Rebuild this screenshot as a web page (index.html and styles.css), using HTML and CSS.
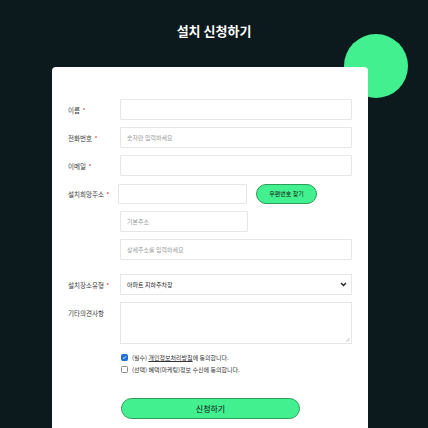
FILE: index.html
```html
<html>
<head>
    <meta charset="utf-8">
    <link rel="stylesheet" href="styles.css">
</head>
<body>
    <div class="page">
        <h1 class="title">설치 신청하기</h1>
        <div class="blob"></div>
        <form class="card">
            <div class="row">
                <label class="lbl">이름 <em>*</em></label>
                <input type="text" class="field">
            </div>
            <div class="row">
                <label class="lbl">전화번호 <em>*</em></label>
                <input type="text" class="field" placeholder="숫자만 입력하세요">
            </div>
            <div class="row">
                <label class="lbl">이메일 <em>*</em></label>
                <input type="text" class="field">
            </div>
            <div class="row">
                <label class="lbl">설치희망주소 <em>*</em></label>
                <div class="addr">
                    <input type="text" class="field zip">
                    <button type="button" class="zipbtn">우편번호 찾기</button>
                </div>
            </div>
            <div class="row">
                <span class="lbl"></span>
                <input type="text" class="field base" placeholder="기본주소">
            </div>
            <div class="row">
                <span class="lbl"></span>
                <input type="text" class="field" placeholder="상세주소를 입력하세요">
            </div>
            <div class="row gapped">
                <label class="lbl">설치장소유형 <em>*</em></label>
                <div class="selectbox">
                    <span>아파트 지하주차장</span>
                    <svg width="7" height="5" viewBox="0 0 7 5"><path d="M1 1 L3.5 3.5 L6 1" fill="none" stroke="#222" stroke-width="1.4"/></svg>
                </div>
            </div>
            <div class="row top">
                <label class="lbl">기타의견사항</label>
                <div class="area">
                    <svg class="grip" width="5" height="5" viewBox="0 0 5 5"><path d="M1 4.5 L4.5 1 M3 4.5 L4.5 3" stroke="#aaa" stroke-width="0.7"/></svg>
                </div>
            </div>
            <div class="agree">
                <label class="chk"><span class="box on"><svg width="7" height="7" viewBox="0 0 7 7"><path d="M1.3 3.6 L2.8 5 L5.7 1.8" fill="none" stroke="#fff" stroke-width="1.2"/></svg></span>(필수)&nbsp;<u>개인정보처리방침</u>에 동의합니다.</label>
                <label class="chk"><span class="box"></span>(선택) 혜택(마케팅)정보 수신에 동의합니다.</label>
            </div>
            <div class="submitrow">
                <button type="button" class="submit">신청하기</button>
            </div>
        </form>
    </div>
</body>
</html>
```

FILE: styles.css
```css
body {
    margin: 0;
    background: #0c1a1d;
    font-family: "Noto Sans CJK KR", "Noto Sans", sans-serif;
}
.page {
    position: relative;
    width: 428px;
    height: 428px;
    overflow: hidden;
}
.title {
    margin: 0;
    padding-top: 21px;
    height: 46px;
    box-sizing: border-box;
    text-align: center;
    color: #fff;
    font-size: 13px;
    font-weight: bold;
    line-height: 20px;
}
.blob {
    position: absolute;
    left: 344px;
    top: 34px;
    width: 64px;
    height: 64px;
    border-radius: 50%;
    background: #43f08f;
}
.card {
    position: relative;
    margin: 21px 0 0 52px;
    width: 316px;
    height: 380px;
    box-sizing: border-box;
    background: #fff;
    border-radius: 4px;
    padding: 32px 16px 0 16px;
}
.row {
    display: flex;
    align-items: center;
    height: 21px;
    margin-bottom: 7px;
}
.row.gapped {
    margin-top: 14px;
}
.row.top {
    align-items: flex-start;
    height: 42px;
}
.lbl {
    width: 52px;
    flex: none;
    font-size: 6.5px;
    color: #3a3a3a;
    white-space: nowrap;
}
.row.top .lbl {
    padding-top: 6px;
}
.lbl em {
    font-style: normal;
    color: #d33;
    margin-left: 1px;
}
.field {
    flex: 1;
    height: 21px;
    box-sizing: border-box;
    border: 1px solid #e6e6e6;
    border-radius: 1px;
    padding: 0 6px;
    font-family: inherit;
    font-size: 6px;
    outline: none;
}
.field::placeholder {
    color: #999;
}
.field.base {
    flex: none;
    width: 128px;
}
.addr {
    flex: 1;
    display: flex;
    align-items: center;
    margin-left: -2px;
}
.field.zip {
    flex: none;
    width: 129px;
    height: 20px;
}
.zipbtn {
    margin-left: 9px;
    width: 61px;
    height: 20px;
    border: 1px solid #2f9c5a;
    border-radius: 10px;
    background: #43f08f;
    font-family: inherit;
    font-size: 6px;
    color: #111;
    padding: 0;
}
.selectbox {
    flex: 1;
    height: 21px;
    box-sizing: border-box;
    border: 1px solid #e6e6e6;
    padding: 0 4px 0 6px;
    display: flex;
    align-items: center;
    justify-content: space-between;
    font-size: 6px;
    color: #222;
}
.area {
    flex: 1;
    height: 42px;
    box-sizing: border-box;
    border: 1px solid #e6e6e6;
    position: relative;
}
.grip {
    position: absolute;
    right: 1px;
    bottom: 1px;
}
.agree {
    margin: 7px 0 0 52px;
}
.chk {
    display: flex;
    align-items: center;
    height: 12px;
    font-size: 6px;
    color: #333;
}
.chk u {
    text-underline-offset: 1px;
}
.box {
    width: 7px;
    height: 7px;
    box-sizing: border-box;
    border: 1px solid #888;
    border-radius: 1.5px;
    margin: 0 4px 0 1px;
    display: flex;
    align-items: center;
    justify-content: center;
}
.box.on {
    background: #1f6fd6;
    border-color: #1f6fd6;
}
.submitrow {
    margin: 23px 0 0 53px;
}
.submit {
    width: 179px;
    height: 21px;
    border: 1px solid #2f9c5a;
    border-radius: 10.5px;
    background: #43f08f;
    font-family: inherit;
    font-size: 8px;
    color: #111;
    padding: 0;
}
```
